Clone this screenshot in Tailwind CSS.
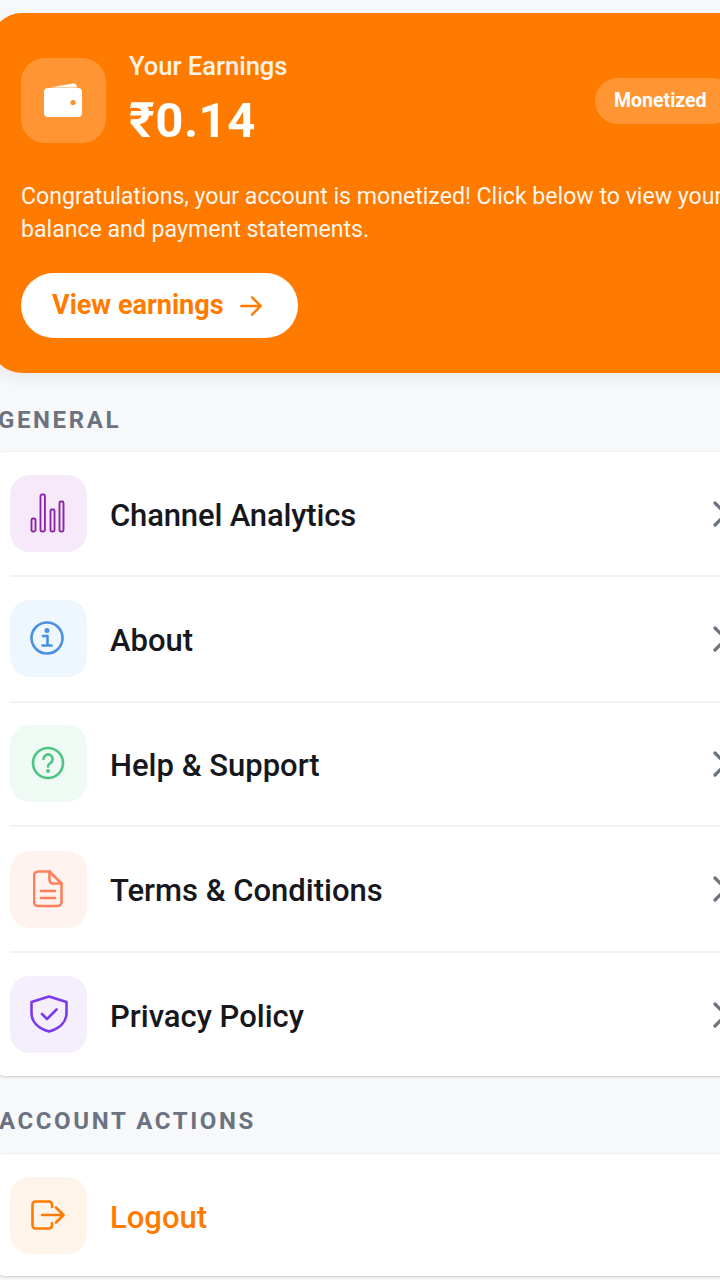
<!DOCTYPE html>
<html lang="en">
<head>
    <meta charset="UTF-8">
    <meta name="viewport" content="width=device-width, initial-scale=1.0">
    <title>Profile</title>
    <script src="https://cdn.jsdelivr.net/npm/@tailwindcss/browser@4"></script>
</head>
<body class="bg-[#f7f8fa] font-[Roboto,sans-serif] overflow-hidden h-[1280px] w-[720px]">
<div class="w-[770px] ml-[-10px] pt-[13px]">

    <!-- earnings card -->
    <section class="h-[360px] bg-[#ff7b00] rounded-[32px] pl-[31px] pr-[20px] pt-[41px] shadow-[0_6px_16px_rgba(0,0,0,0.06)] text-white">
        <div class="flex items-center h-[92px]">
            <div class="w-[85px] h-[85px] rounded-[24px] bg-white/20 flex items-center justify-center">
                <svg class="ml-[-2px]" width="38" height="34" viewBox="0 0 38 34" fill="none">
                    <path d="M6 4.500 L29 0.500 Q32.500 0 33 4.500Z" fill="#fff"/>
                    <rect x="0" y="5" width="38" height="29" rx="4" fill="#fff"/>
                    <circle cx="29" cy="19.500" r="2.600" fill="#ff8f2b"/>
                </svg>
            </div>
            <div class="ml-[23px] w-[466px]">
                <p class="text-[25.5px] leading-[30px] font-medium text-white/90">Your Earnings</p>
                <p class="text-[49px] leading-[56px] font-bold mt-[12px] tracking-[0.5px]">₹0.14</p>
            </div>
            <div class="h-[46px] w-[140px] mt-[2px] rounded-full bg-white/20 flex items-center pl-[19px] text-[19.5px] font-bold">Monetized</div>
        </div>
        <p class="mt-[34px] text-[23.1px] leading-[33px] text-white/95 whitespace-nowrap">Congratulations, your account is monetized! Click below to view your<br>balance and payment statements.</p>
        <div class="mt-[27px] w-[277px] h-[65px] rounded-full bg-white flex items-center pl-[31px] text-[#ff7b00] text-[27px] font-bold">
            <span>View earnings</span>
            <svg class="ml-[14px]" width="26" height="26" viewBox="0 0 24 24" fill="none" stroke="currentColor" stroke-width="2.2" stroke-linecap="round" stroke-linejoin="round"><path d="M3 12h18M13 4l8 8-8 8"/></svg>
        </div>
    </section>

    <h2 class="pl-[8px] mt-[33px] text-[24px] leading-[28px] font-bold tracking-[2.6px] text-[#6b7280]">GENERAL</h2>

    <!-- general list -->
    <div class="mt-[18px] bg-white rounded-[16px] px-[20px] shadow-[0_1px_3px_rgba(0,0,0,0.2)]">
        <div class="h-[125px] flex items-center border-b-2 border-[#f1f2f4]">
            <div class="w-[77px] h-[77px] rounded-[20px] bg-[#f6eafa] flex items-center justify-center shrink-0">
                <svg class="ml-[-1px]" width="36" height="42" viewBox="0 0 36 42" fill="none" stroke="#8e24aa" stroke-width="1.900"><rect x="1.500" y="25.500" width="4" height="13" rx="1.500"/><rect x="10.500" y="1.500" width="4.400" height="37" rx="1.500"/><rect x="20.500" y="16.500" width="4" height="22" rx="1.500"/><rect x="29.500" y="8.500" width="4" height="30" rx="1.500"/></svg>
            </div>
            <span class="ml-[23px] mt-[5px] text-[31px] tracking-[-0.15px] font-medium text-[#16181d] flex-1">Channel Analytics</span>
            <svg width="24" height="28" viewBox="0 0 24 28" fill="none" stroke="#6b7280" stroke-width="3.200" stroke-linecap="round" stroke-linejoin="round" class="mr-[5px]"><path d="M4 3l11 11L4 25"/></svg>
        </div>
        <div class="h-[126px] flex items-center border-b-2 border-[#f1f2f4]">
            <div class="w-[77px] h-[77px] mt-[-2px] rounded-[20px] bg-[#eef6fe] flex items-center justify-center shrink-0">
                <svg class="ml-[-3px]" width="36" height="36" viewBox="0 0 36 36" fill="none" stroke="#4a90e2" stroke-width="2.600" stroke-linecap="round" stroke-linejoin="round"><circle cx="18" cy="18" r="15.500"/><path d="M14 16h4.500v9M13.500 25.500h9"/><circle cx="18" cy="10.500" r="1.200" fill="#4a90e2"/></svg>
            </div>
            <span class="ml-[23px] mt-[5px] text-[31px] font-medium text-[#16181d] flex-1">About</span>
            <svg width="24" height="28" viewBox="0 0 24 28" fill="none" stroke="#6b7280" stroke-width="3.200" stroke-linecap="round" stroke-linejoin="round" class="mr-[5px]"><path d="M4 3l11 11L4 25"/></svg>
        </div>
        <div class="h-[124px] flex items-center border-b-2 border-[#f1f2f4]">
            <div class="w-[77px] h-[77px] mt-[-2px] rounded-[20px] bg-[#f0faf5] flex items-center justify-center shrink-0">
                <svg class="ml-[-1px]" width="34" height="34" viewBox="0 0 34 34" fill="none" stroke="#4fc585" stroke-width="2.600" stroke-linecap="round" stroke-linejoin="round"><circle cx="17" cy="17" r="15"/><path d="M12.500 13a4.600 4.600 0 1 1 7 4c-1.600 1-2.500 2-2.500 3.600"/><circle cx="17" cy="25" r="0.800" fill="#4fc585"/></svg>
            </div>
            <span class="ml-[23px] mt-[5px] text-[31px] font-medium text-[#16181d] flex-1">Help &amp; Support</span>
            <svg width="24" height="28" viewBox="0 0 24 28" fill="none" stroke="#6b7280" stroke-width="3.200" stroke-linecap="round" stroke-linejoin="round" class="mr-[5px]"><path d="M4 3l11 11L4 25"/></svg>
        </div>
        <div class="h-[126px] flex items-center border-b-2 border-[#f1f2f4]">
            <div class="w-[77px] h-[77px] rounded-[20px] bg-[#fff2ef] flex items-center justify-center shrink-0">
                <svg class="ml-[-2px]" width="30" height="38" viewBox="0 0 30 38" fill="none" stroke="#ff7f5c" stroke-width="2.600" stroke-linecap="round" stroke-linejoin="round"><path d="M5 1.500h11.500L28.500 13.500V32a4 4 0 0 1-4 4H5a4 4 0 0 1-4-4V5.500a4 4 0 0 1 4-4Z"/><path d="M16.500 1.500V10a3.500 3.500 0 0 0 3.500 3.500h8.500"/><path d="M8 21h14M8 28h14"/></svg>
            </div>
            <span class="ml-[23px] mt-[5px] text-[31px] font-medium text-[#16181d] flex-1">Terms &amp; Conditions</span>
            <svg width="24" height="28" viewBox="0 0 24 28" fill="none" stroke="#6b7280" stroke-width="3.200" stroke-linecap="round" stroke-linejoin="round" class="mr-[5px]"><path d="M4 3l11 11L4 25"/></svg>
        </div>
        <div class="h-[123px] flex items-center">
            <div class="w-[77px] h-[77px] rounded-[20px] bg-[#f4eefd] flex items-center justify-center shrink-0">
                <svg class="mt-[-2px]" width="38" height="38" viewBox="0 0 38 38" fill="none" stroke="#7c3aed" stroke-width="2.600" stroke-linecap="round" stroke-linejoin="round"><path d="M19 1.500 36.500 7v11c0 9-7 15.500-17.500 18.500C8.500 33.500 1.500 27 1.500 18V7Z"/><path d="M12 19l5 5 9.500-9.500"/></svg>
            </div>
            <span class="ml-[23px] mt-[5px] text-[31px] font-medium text-[#16181d] flex-1">Privacy Policy</span>
            <svg width="24" height="28" viewBox="0 0 24 28" fill="none" stroke="#6b7280" stroke-width="3.200" stroke-linecap="round" stroke-linejoin="round" class="mr-[5px]"><path d="M4 3l11 11L4 25"/></svg>
        </div>
    </div>

    <h2 class="pl-[9px] mt-[31px] text-[24px] leading-[28px] font-bold tracking-[2.6px] text-[#6b7280]">ACCOUNT ACTIONS</h2>

    <!-- account actions -->
    <div class="mt-[19px] bg-white rounded-[16px] px-[20px] shadow-[0_1px_3px_rgba(0,0,0,0.2)]">
        <div class="h-[122px] flex items-center">
            <div class="w-[77px] h-[77px] rounded-[20px] bg-[#fff4ea] flex items-center justify-center shrink-0">
                <svg class="ml-[-2px]" width="34" height="30" viewBox="0 0 34 30" fill="none" stroke="#ff7b00" stroke-width="2.600" stroke-linecap="round" stroke-linejoin="round"><path d="M21 7V4.500A3 3 0 0 0 18 1.500H4.500A3 3 0 0 0 1.500 4.500v21a3 3 0 0 0 3 3H18a3 3 0 0 0 3-3V23"/><path d="M11 15h21.500M25 7.500l7.500 7.500-7.500 7.500"/></svg>
            </div>
            <span class="ml-[23px] mt-[6px] text-[31px] font-medium text-[#ff7b00]">Logout</span>
        </div>
    </div>
</div>
</body>
</html>
